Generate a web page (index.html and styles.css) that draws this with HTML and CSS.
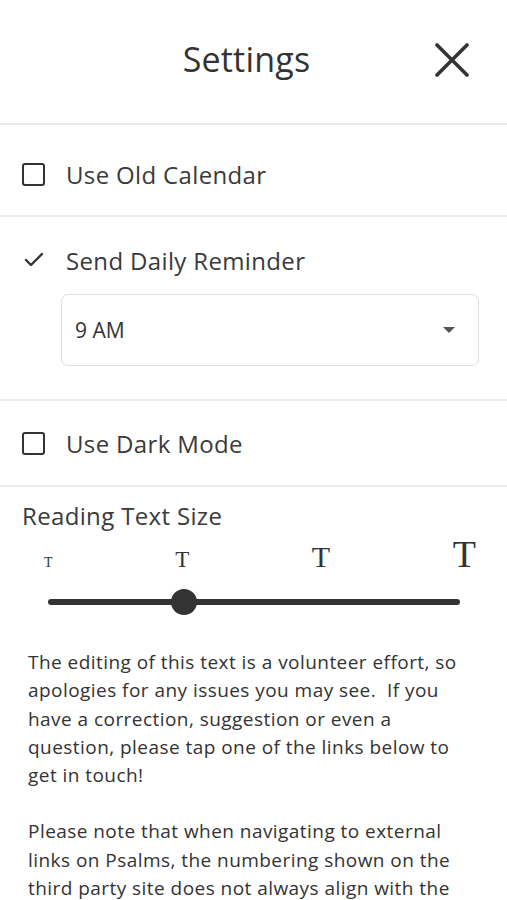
FILE: index.html
```html
<!DOCTYPE html>
<html lang="en">
<head>
    <meta charset="UTF-8">
    <meta name="viewport" content="width=device-width, initial-scale=1.0">
    <title>Settings</title>
    <link rel="stylesheet" href="styles.css">
</head>
<body>
    <div class="header">
        <h1>Settings</h1>
        <button class="close" aria-label="Close">
            <svg width="34" height="34" viewBox="0 0 34 34">
                <path d="M2 2 L32 32 M32 2 L2 32" stroke="#333" stroke-width="3.6" stroke-linecap="round"/>
            </svg>
        </button>
    </div>

    <div class="row row-calendar">
        <span class="checkbox"></span>
        <span class="label">Use Old Calendar</span>
    </div>

    <div class="row row-reminder">
        <div class="option">
            <span class="check">
                <svg width="20" height="16" viewBox="0 0 20 16">
                    <path d="M2 8 L7 13 L18 2" fill="none" stroke="#333" stroke-width="2.4" stroke-linecap="round" stroke-linejoin="round"/>
                </svg>
            </span>
            <span class="label">Send Daily Reminder</span>
        </div>
        <div class="select">
            <span>9 AM</span>
            <span class="caret"></span>
        </div>
    </div>

    <div class="row row-dark">
        <span class="checkbox"></span>
        <span class="label">Use Dark Mode</span>
    </div>

    <div class="size-section">
        <div class="size-title">Reading Text Size</div>
        <div class="size-letters">
            <span class="t1">T</span>
            <span class="t2">T</span>
            <span class="t3">T</span>
            <span class="t4">T</span>
        </div>
        <div class="slider">
            <div class="track"></div>
            <div class="thumb"></div>
        </div>
    </div>

    <div class="notes">
        <p>The editing of this text is a volunteer effort, so apologies for any issues you may see.&nbsp; If you have a correction, suggestion or even a question, please tap one of the links below to get in touch!</p>
        <p>Please note that when navigating to external links on Psalms, the numbering shown on the third party site does not always align with the numbering used here.</p>
    </div>
</body>
</html>
```

FILE: styles.css
```css
* {
    margin: 0;
    padding: 0;
    box-sizing: border-box;
}

body {
    font-family: 'Open Sans', 'Noto Sans', sans-serif;
    background: white;
    color: #333;
    width: 507px;
    overflow: hidden;
}

.header {
    height: 125px;
    display: flex;
    align-items: center;
    justify-content: center;
    position: relative;
    border-bottom: 2px solid #ececec;
}

.header h1 {
    font-size: 34px;
    font-weight: 400;
    color: #333;
    margin-top: -6px;
    margin-left: -14px;
    letter-spacing: 0.2px;
}

.close {
    position: absolute;
    right: 38px;
    top: 43px;
    background: none;
    border: none;
    width: 34px;
    height: 34px;
}

.row {
    border-bottom: 2px solid #ececec;
}

.row-calendar,
.row-dark {
    display: flex;
    align-items: center;
    padding-left: 22px;
}

.row-calendar {
    height: 92px;
    padding-top: 8px;
}

.row-dark {
    height: 86px;
}

.checkbox {
    width: 23px;
    height: 23px;
    border: 2.5px solid #333;
    border-radius: 3px;
    margin-right: 21px;
}

.label {
    font-size: 24px;
    color: #3a3a3a;
    letter-spacing: 0.35px;
}

.row-reminder {
    height: 184px;
    padding-top: 23px;
}

.option {
    display: flex;
    align-items: center;
    padding-left: 24px;
    height: 40px;
}

.check {
    width: 42px;
    display: flex;
    align-items: center;
}

.select {
    margin: 14px 28px 0 61px;
    height: 72px;
    border: 1.5px solid #dedede;
    border-radius: 7px;
    display: flex;
    align-items: center;
    justify-content: space-between;
    padding: 0 23px 0 13px;
    font-size: 21px;
    color: #333;
}

.caret {
    width: 0;
    height: 0;
    border-left: 6px solid transparent;
    border-right: 6px solid transparent;
    border-top: 6px solid #555;
}

.size-section {
    padding: 13px 0 0 22px;
}

.size-title {
    font-size: 24px;
    color: #3a3a3a;
    line-height: 32px;
    letter-spacing: 0.35px;
}

.size-letters {
    display: flex;
    justify-content: space-between;
    align-items: baseline;
    width: 432px;
    margin-left: 22px;
    margin-top: 2px;
    font-family: 'Liberation Serif', serif;
    color: #333;
    height: 40px;
    line-height: 40px;
}

.t1 { font-size: 14px; }
.t2 { font-size: 23px; }
.t3 { font-size: 30px; }
.t4 { font-size: 38px; }

.slider {
    position: relative;
    height: 30px;
    margin: 13px 0 0 26px;
    width: 412px;
}

.track {
    position: absolute;
    left: 0;
    right: 0;
    top: 12px;
    height: 6px;
    border-radius: 3px;
    background: #333;
}

.thumb {
    position: absolute;
    left: 123px;
    top: 2px;
    width: 26px;
    height: 26px;
    border-radius: 50%;
    background: #333;
}

.notes {
    padding: 31px 36px 0 28px;
    font-size: 19px;
    line-height: 28.3px;
    letter-spacing: 0.45px;
    color: #333;
}

.notes p {
    margin-bottom: 28px;
}
```
